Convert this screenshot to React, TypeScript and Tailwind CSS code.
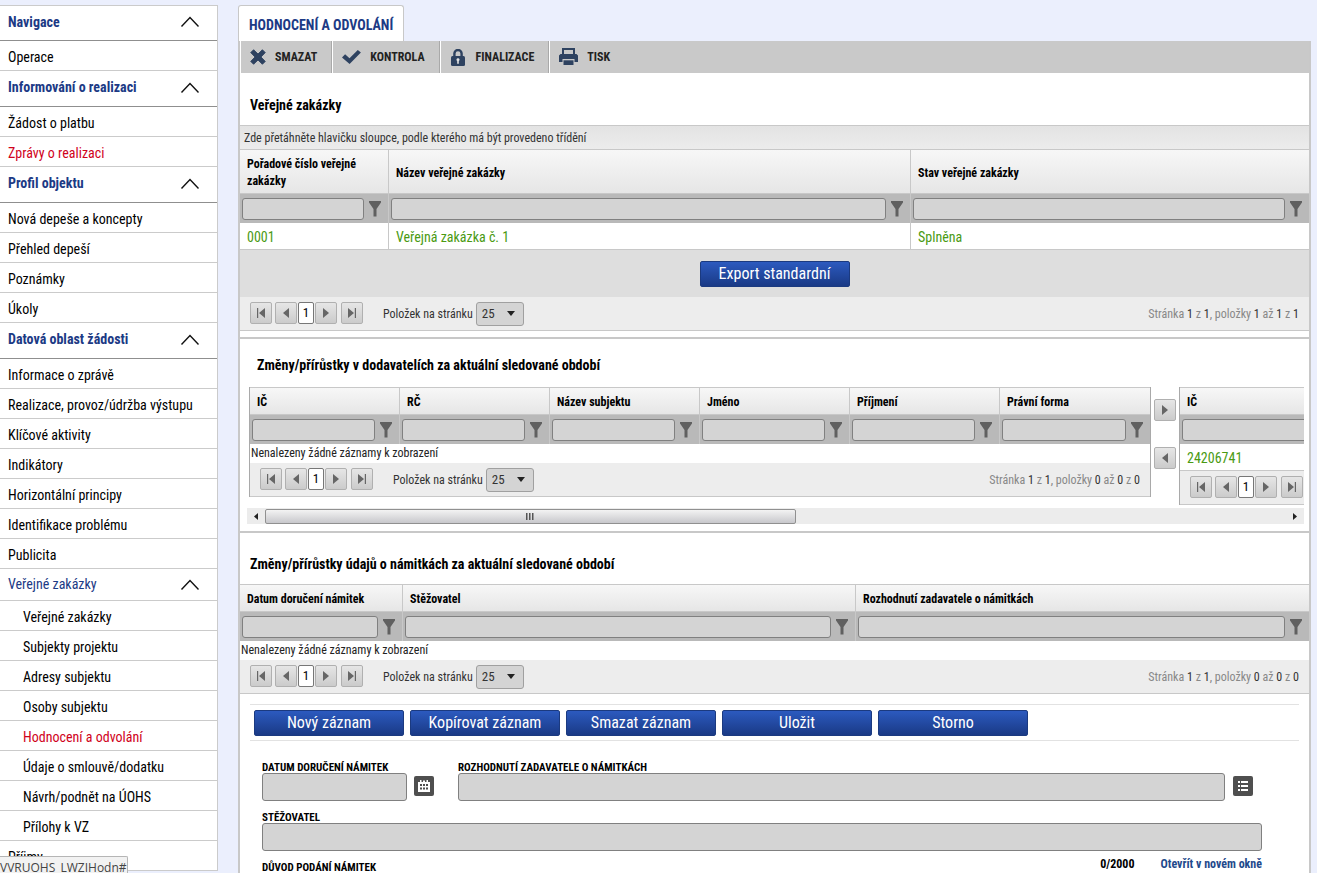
import { useState } from 'react';
import type { ReactNode } from 'react';

type NavItem = { label: string; active?: boolean };
type NavGroup = { title: string; items: NavItem[] };

const navGroups: NavGroup[] = [
    { title: 'Navigace', items: [{ label: 'Operace' }] },
    { title: 'Informování o realizaci', items: [{ label: 'Žádost o platbu' }, { label: 'Zprávy o realizaci', active: true }] },
    {
        title: 'Profil objektu',
        items: [{ label: 'Nová depeše a koncepty' }, { label: 'Přehled depeší' }, { label: 'Poznámky' }, { label: 'Úkoly' }],
    },
    {
        title: 'Datová oblast žádosti',
        items: [
            { label: 'Informace o zprávě' },
            { label: 'Realizace, provoz/údržba výstupu' },
            { label: 'Klíčové aktivity' },
            { label: 'Indikátory' },
            { label: 'Horizontální principy' },
            { label: 'Identifikace problému' },
            { label: 'Publicita' },
        ],
    },
];

const subItems: NavItem[] = [
    { label: 'Veřejné zakázky' },
    { label: 'Subjekty projektu' },
    { label: 'Adresy subjektu' },
    { label: 'Osoby subjektu' },
    { label: 'Hodnocení a odvolání', active: true },
    { label: 'Údaje o smlouvě/dodatku' },
    { label: 'Návrh/podnět na ÚOHS' },
    { label: 'Přílohy k VZ' },
];

const Chevron = () => (
    <svg width="20" height="12" viewBox="0 0 20 12" fill="none" stroke="#111" strokeWidth="1.4">
        <path d="M1.500 10.5 10 1.5l8.500 9" />
    </svg>
);

const Funnel = () => (
    <svg width="12" height="16" viewBox="0 0 12 16" fill="#606060" className="shrink-0">
        <path d="M0 0h12v1.500L7.500 8v7.500h-3V8L0 1.500z" />
    </svg>
);

const CrossIcon = () => (
    <svg width="16" height="16" viewBox="0 0 16 16" fill="#2e4260">
        <path d="M3.6.8 8 5.1 12.4.8l2.8 2.8L10.9 8l4.3 4.4-2.8 2.8L8 10.900l-4.400 4.300-2.800-2.800L5.100 8 .8 3.600z" stroke="#2e4260" strokeLinejoin="round" />
    </svg>
);

const CheckIcon = () => (
    <svg width="19" height="16" viewBox="0 0 19 16" fill="#2e4260">
        <path d="M0 8.4 3.1 5.2l4.4 4L15.8 1l3.1 2.6L7.6 15z" />
    </svg>
);

const LockIcon = () => (
    <svg width="17" height="17" viewBox="-1 0 17 17">
        <path d="M3.4 8V4.6a3.6 3.6 0 0 1 7.2 0V8" fill="none" stroke="#2e4260" strokeWidth="2.4" />
        <rect y="7" width="14" height="10" rx="1.5" fill="#2e4260" />
        <path d="M7 9.2a1.5 1.5 0 0 1 .8 2.8v2.8H6.2V12A1.5 1.5 0 0 1 7 9.200z" fill="#e4e4e4" />
    </svg>
);

const PrinterIcon = () => (
    <svg width="19" height="18" viewBox="0 0 19 18">
        <path d="M4 7V1h11v6" fill="none" stroke="#2e4260" strokeWidth="2" />
        <path d="M1.500 6h16L19 7.500V14h-3.500v-3h-12v3H0V7.500z" fill="#2e4260" />
        <path d="M4.500 12.300h10V17h-10z" fill="#2e4260" />
    </svg>
);

const CalendarIcon = () => (
    <svg width="14" height="13" viewBox="0 0 14 13" fill="#fff">
        <path d="M1 2h2V0h1.500v2H6V.5h2V2h1.500V0H11v2h2v10H1z" />
        <path d="M3 4h2v2H3zm3 0h2v2H6zm3 0h2v2H9zM3 7.500h2v2H3zm3 0h2v2H6zm3 0h2v2H9z" fill="#4f4f4f" />
    </svg>
);

const ListIcon = () => (
    <svg width="10" height="10" viewBox="0 0 10 10" fill="#fff">
        <path d="M0 0h2v2H0zm3 0h7v2H3zM0 4h2v2H0zm3 0h7v2H3zM0 8h2v2H0zm3 0h7v2H3z" />
    </svg>
);

const arrows = {
    first: 'M0 0h1.200v10H0zM8 0v10L2 5z',
    prev: 'M7 0v10L1 5z',
    next: 'M1 0v10l6-5z',
    last: 'M0 0v10l6-5zM6.800 0H8v10H6.800z',
};

const ArrowButton = ({ kind, label, className = '' }: { kind: keyof typeof arrows; label: string; className?: string }) => (
    <button
        aria-label={label}
        className={`flex h-[22px] w-[22px] shrink-0 items-center justify-center rounded-[2px] border border-[#b0b0b0] bg-linear-to-b from-[#e6e6e6] to-[#cbcbcb] ${className}`}
    >
        <svg width="8" height="10" viewBox="0 0 8 10" fill="#666">
            <path d={arrows[kind]} />
        </svg>
    </button>
);

const Pager = ({ id, count, short }: { id: string; count?: string; short?: boolean }) => (
    <div className="flex h-[34px] items-start border-b border-[#c8c8c8] bg-[#ededed] pt-[5px] pr-[10px] pl-[10px] text-[12px] leading-[24px] text-[#333]">
        <ArrowButton kind="first" label="První stránka" className="mr-[3px]" />
        <ArrowButton kind="prev" label="Předchozí stránka" className="mr-px" />
        <button className="h-[22px] w-[16px] shrink-0 rounded-[2px] border border-[#777] bg-white text-[13px] leading-[20px] text-black">1</button>
        <ArrowButton kind="next" label="Další stránka" className="mr-[4px] ml-px" />
        <ArrowButton kind="last" label="Poslední stránka" />
        {!short && (
            <>
                <label htmlFor={id} className="ml-[20px] whitespace-nowrap">Položek na stránku</label>
                <div className="relative ml-[3px]">
                    <select id={id} className="block h-[24px] w-[48px] appearance-none rounded-[3px] border border-[#a0a0a0] bg-[#d4d4d4] pl-[5px] text-[13px] leading-[22px]">
                        <option>25</option>
                        <option>50</option>
                    </select>
                    <svg width="8" height="5" viewBox="0 0 8 5" fill="#222" className="pointer-events-none absolute top-[9px] right-[9px]">
                        <path d="M0 0h8L4 5z" />
                    </svg>
                </div>
                <div className="ml-auto whitespace-nowrap text-[#888]">
                    Stránka <span className="text-[#333]">1</span> z <span className="text-[#333]">1</span>, položky{' '}
                    <span className="text-[#333]">{count}</span> až <span className="text-[#333]">{count}</span> z{' '}
                    <span className="text-[#333]">{count}</span>
                </div>
            </>
        )}
    </div>
);

type Column = { label: string; width: string };

const Grid = ({ columns, row, empty, tall }: { columns: Column[]; row?: string[]; empty?: boolean; tall?: boolean }) => (
    <table className="w-full table-fixed border-separate border-spacing-0">
        <colgroup>
            {columns.map((c) => <col key={c.label} className={c.width} />)}
        </colgroup>
        <thead>
            <tr className={tall ? 'h-[44px]' : 'h-[27px]'}>
                {columns.map((c) => (
                    <th
                        key={c.label}
                        className={`border-t border-r border-[#c8c8c8] bg-linear-to-b from-[#f7f7f7] to-[#e6e6e6] pt-[3px] pb-0 pl-[7px] text-left text-[12px] leading-[17px] font-bold text-black last:border-r-0 ${tall ? 'pr-[20px]' : ''}`}
                    >
                        {c.label}
                    </th>
                ))}
            </tr>
            <tr className="h-[30px]">
                {columns.map((c) => (
                    <td key={c.label} className="border-t border-r border-t-[#c8c8c8] border-r-[#c8c8c8] bg-[#b9b9b9] p-0 last:border-r-0">
                        <div className="flex items-center gap-[5px] pr-[7px] pl-[2px]">
                            <input aria-label={c.label} className="h-[22px] min-w-0 flex-1 rounded-[3px] border border-[#808080] bg-[#d4d4d4] px-1 text-[13px]" />
                            <Funnel />
                        </div>
                    </td>
                ))}
            </tr>
        </thead>
        <tbody>
            {row && (
                <tr className="h-[27px]">
                    {row.map((v) => (
                        <td key={v} className="border-r border-b border-[#c8c8c8] bg-white p-0 pt-[2px] pl-[7px] text-[14px] leading-[24px] text-[#4a9a12] last:border-r-0">{v}</td>
                    ))}
                </tr>
            )}
            {empty && (
                <tr className="h-[19px]">
                    <td colSpan={columns.length} className="bg-white p-0 pl-px text-[12px] leading-[19px] text-[#222]">Nenalezeny žádné záznamy k zobrazení</td>
                </tr>
            )}
        </tbody>
    </table>
);

const BlueButton = ({ children }: { children: ReactNode }) => (
    <button className="h-[26px] w-[150px] rounded-[2px] border border-[#1b3a80] bg-linear-to-b from-[#2c5abf] to-[#1a3a86] text-[16px] leading-[24px] text-white">
        {children}
    </button>
);

const NavLink = ({ item, sub }: { item: NavItem; sub?: boolean }) => (
    <a
        href="#"
        className={`block h-[30px] border-b border-[#cbcbcb] text-[14px] leading-[32px] whitespace-nowrap ${sub ? 'pl-[23px]' : 'pl-[8px]'} ${item.active ? 'text-[#d0021b]' : 'text-black'}`}
    >
        {item.label}
    </a>
);

const tools = [
    { label: 'SMAZAT', icon: CrossIcon },
    { label: 'KONTROLA', icon: CheckIcon },
    { label: 'FINALIZACE', icon: LockIcon },
    { label: 'TISK', icon: PrinterIcon },
];

const procurementColumns: Column[] = [
    { label: 'Pořadové číslo veřejné zakázky', width: 'w-[149px]' },
    { label: 'Název veřejné zakázky', width: 'w-[522px]' },
    { label: 'Stav veřejné zakázky', width: 'w-auto' },
];

const supplierColumns: Column[] = ['IČ', 'RČ', 'Název subjektu', 'Jméno', 'Příjmení', 'Právní forma'].map((label) => ({ label, width: 'w-[150px]' }));

const objectionColumns: Column[] = [
    { label: 'Datum doručení námitek', width: 'w-[163px]' },
    { label: 'Stěžovatel', width: 'w-[453px]' },
    { label: 'Rozhodnutí zadavatele o námitkách', width: 'w-auto' },
];

const fieldClass = 'block h-[28px] rounded-[3px] border border-[#808080] bg-[#d4d4d4] px-2 text-[14px]';
const fieldLabelClass = 'block h-[12px] text-[11px]';
const iconButtonClass = 'mt-[3px] flex h-[20px] w-[20px] shrink-0 items-center justify-center rounded-[2px] bg-[#4f4f4f]';

const Sidebar = () => (
    <nav className="w-[218px] shrink-0 border-t border-r border-[#cbcbcb] bg-white">
        {navGroups.map((group, i) => (
            <div key={group.title}>
                <button
                    className={`flex w-full items-center justify-between border-b border-[#8f8f8f] pr-[17px] pb-[2px] pl-[8px] text-[14px] font-bold text-[#1c3a85] ${i === 0 ? 'h-[35px]' : 'h-[36px]'}`}
                >
                    {group.title}
                    <Chevron />
                </button>
                {group.items.map((item) => <NavLink key={item.label} item={item} />)}
            </div>
        ))}
        <button className="flex h-[32px] w-full items-center justify-between border-b border-[#cbcbcb] pr-[17px] pl-[8px] text-[14px] text-[#1c3a85]">
            Veřejné zakázky
            <Chevron />
        </button>
        {subItems.map((item) => <NavLink key={item.label} item={item} sub />)}
        <NavLink item={{ label: 'Příjmy' }} />
    </nav>
);

const App = () => {
    const [decision, setDecision] = useState('');

    return (
        <div className="flex h-screen items-start overflow-hidden bg-[#ebeffd] pt-[5px] font-['Roboto_Condensed','Liberation_Sans_Narrow',Roboto,sans-serif] text-black">
            <Sidebar />

            <main className="mr-[6px] ml-[20px] min-w-0 flex-1">
                <div className="flex">
                    <h1 className="h-[36px] rounded-t-[3px] border border-b-0 border-[#c8c8c8] bg-white px-[10px] text-[14px] leading-[38px] font-bold whitespace-nowrap text-[#1c3a85]">
                        HODNOCENÍ A ODVOLÁNÍ
                    </h1>
                </div>

                <div className="border-x-2 border-[#c8c8c8] bg-white">
                    {/* Toolbar */}
                    <div className="flex h-[32px] bg-[#c9c9c9]">
                        {tools.map(({ label, icon: Icon }) => (
                            <button key={label} className="flex items-center gap-[9px] border-r border-l border-r-[#a9a9a9] border-l-white pr-[14px] pl-[9px] text-[12px] font-bold text-[#222] last:border-r-0">
                                <Icon />
                                {label}
                            </button>
                        ))}
                    </div>

                    <section className="border-b-2 border-[#c8c8c8] pb-[6px]">
                        <h2 className="h-[52px] pl-[10px] text-[14px] leading-[64px] font-bold">Veřejné zakázky</h2>
                        <div className="h-[24px] border-t border-[#c8c8c8] bg-linear-to-b from-[#e3e3e3] to-[#ececec] pl-[4px] text-[12px] leading-[24px] text-[#333]">
                            Zde přetáhněte hlavičku sloupce, podle kterého má být provedeno třídění
                        </div>
                        <Grid columns={procurementColumns} row={['0001', 'Veřejná zakázka č. 1', 'Splněna']} tall />
                        <div className="flex h-[47px] items-center justify-center bg-[#dedede]">
                            <BlueButton>Export standardní</BlueButton>
                        </div>
                        <Pager id="size-procurement" count="1" />
                    </section>

                    <section className="border-b-2 border-[#c8c8c8] pr-[5px] pb-[7px] pl-[7px]">
                        <h2 className="h-[48px] pl-[10px] text-[14px] leading-[52px] font-bold">Změny/přírůstky v dodavatelích za aktuální sledované období</h2>
                        <div className="flex h-[121px] items-start overflow-hidden pl-[2px]">
                            <div className="w-[902px] shrink-0 border-x border-[#a9a9a9]">
                                <Grid columns={supplierColumns} empty />
                                <Pager id="size-suppliers" count="0" />
                            </div>
                            <div className="mx-[3px] mt-[12px] flex shrink-0 flex-col gap-[26px]">
                                <ArrowButton kind="next" label="Přidat" />
                                <ArrowButton kind="prev" label="Odebrat" />
                            </div>
                            <div className="w-[152px] shrink-0 border-l border-[#a9a9a9]">
                                <Grid columns={supplierColumns.slice(0, 1)} row={['24206741']} />
                                <Pager id="size-selected" short />
                            </div>
                        </div>
                        {/* Horizontal scrollbar */}
                        <div className="flex h-[16px] items-center bg-[#ececec]">
                            <button aria-label="Posunout vlevo" className="flex h-full w-[18px] items-center justify-center">
                                <svg width="4" height="7" viewBox="0 0 4 7" fill="#222"><path d="M4 0v7L0 3.500z" /></svg>
                            </button>
                            <div className="flex-1">
                                <div className="flex h-[15px] w-[52%] items-center justify-center rounded-[2px] border border-[#909090] bg-linear-to-b from-[#f3f3f3] to-[#c8c8cc]">
                                    <svg width="8" height="7" viewBox="0 0 8 7" fill="#555"><path d="M0 0h1.500v7H0zm3 0h1.500v7H3zm3 0h1.500v7H6z" /></svg>
                                </div>
                            </div>
                            <button aria-label="Posunout vpravo" className="flex h-full w-[18px] items-center justify-center">
                                <svg width="4" height="7" viewBox="0 0 4 7" fill="#222"><path d="M0 0v7l4-3.500z" /></svg>
                            </button>
                        </div>
                    </section>

                    <section>
                        <h2 className="h-[51px] pl-[10px] text-[14px] leading-[62px] font-bold">Změny/přírůstky údajů o námitkách za aktuální sledované období</h2>
                        <Grid columns={objectionColumns} empty />
                        <Pager id="size-objections" count="0" />

                        <div className="mx-[10px] mt-[10px] flex gap-[6px] border-y border-[#e2e2e2] px-[4px] pt-[5px] pb-[4px]">
                            <BlueButton>Nový záznam</BlueButton>
                            <BlueButton>Kopírovat záznam</BlueButton>
                            <BlueButton>Smazat záznam</BlueButton>
                            <BlueButton>Uložit</BlueButton>
                            <BlueButton>Storno</BlueButton>
                        </div>

                        <form className="pt-[20px] pr-[47px] pl-[22px] text-[12px] leading-[14px] font-bold">
                            <div className="flex">
                                <div className="w-[196px] shrink-0">
                                    <label htmlFor="date" className={fieldLabelClass}>DATUM DORUČENÍ NÁMITEK</label>
                                    <div className="flex items-start gap-[7px]">
                                        <input id="date" className={`${fieldClass} w-[145px]`} />
                                        <button type="button" aria-label="Vybrat datum" className={iconButtonClass}><CalendarIcon /></button>
                                    </div>
                                </div>
                                <div className="min-w-0 flex-1 pr-[9px]">
                                    <label htmlFor="decision" className={fieldLabelClass}>ROZHODNUTÍ ZADAVATELE O NÁMITKÁCH</label>
                                    <div className="flex items-start gap-[8px]">
                                        <input id="decision" value={decision} onChange={(e) => setDecision(e.target.value)} className={`${fieldClass} min-w-0 flex-1`} />
                                        <button type="button" aria-label="Vybrat ze seznamu" className={iconButtonClass}><ListIcon /></button>
                                    </div>
                                </div>
                            </div>
                            <label htmlFor="complainant" className={`${fieldLabelClass} mt-[10px]`}>STĚŽOVATEL</label>
                            <input id="complainant" className={`${fieldClass} w-full`} />
                            <div className="mt-[6px] flex items-start">
                                <label htmlFor="reason" className="pt-[4px] text-[11px]">DŮVOD PODÁNÍ NÁMITEK</label>
                                <span className="ml-auto">0/2000</span>
                                <a href="#" className="ml-[26px] text-[#1f4a8c]">Otevřít v novém okně</a>
                            </div>
                            <textarea id="reason" className="mt-1 block h-[80px] w-full rounded-[3px] border border-[#808080] bg-[#d4d4d4]" />
                        </form>
                    </section>
                </div>
            </main>

            {/* Browser link hint */}
            <div className="fixed bottom-0 left-0 h-[17px] w-[128px] overflow-hidden rounded-tr-[2px] border-t border-r border-[#b5b5b5] bg-[#f2f2f2] font-['Open_Sans',sans-serif] text-[12px] leading-[21px] whitespace-nowrap text-[#444]">
                VVRUOHS_LWZIHodn#
            </div>
        </div>
    );
};

export default App;
